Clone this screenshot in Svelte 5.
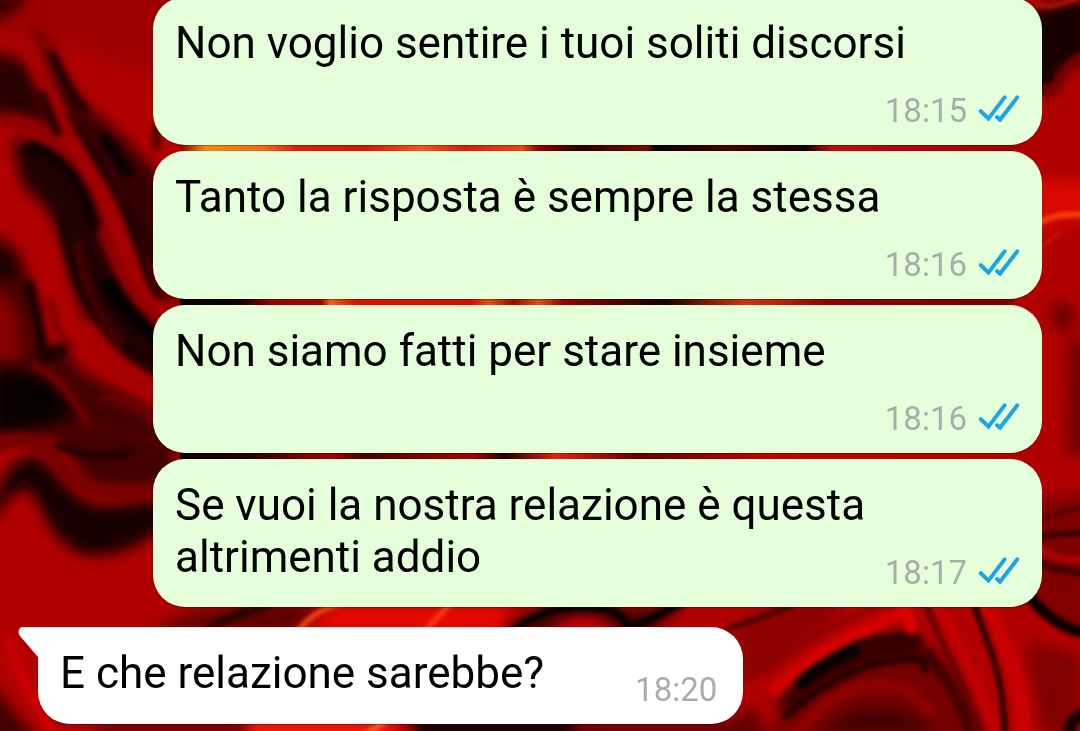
<script lang="ts">
  type Message = { text: string; time: string; sent: boolean };

  const messages: Message[] = [
    { text: 'Non voglio sentire i tuoi soliti discorsi', time: '18:15', sent: true },
    { text: 'Tanto la risposta è sempre la stessa', time: '18:16', sent: true },
    { text: 'Non siamo fatti per stare insieme', time: '18:16', sent: true },
    { text: 'Se vuoi la nostra relazione è questa altrimenti addio', time: '18:17', sent: true },
    { text: 'E che relazione sarebbe?', time: '18:20', sent: false },
  ];
</script>

<svg class="wallpaper" viewBox="0 0 1080 731" preserveAspectRatio="xMidYMid slice" aria-hidden="true">
  <defs>
    <filter id="soft" x="-20%" y="-20%" width="140%" height="140%" color-interpolation-filters="sRGB"><feGaussianBlur stdDeviation="7" /></filter>
    <filter id="fine" x="-20%" y="-20%" width="140%" height="140%" color-interpolation-filters="sRGB"><feGaussianBlur stdDeviation="3" /></filter>
    <filter id="sharp" x="-20%" y="-20%" width="140%" height="140%" color-interpolation-filters="sRGB"><feGaussianBlur stdDeviation="2" /></filter>
    <linearGradient id="gap1">
      <stop offset="0" stop-color="#8c0000" />
      <stop offset="0.03" stop-color="#f08a10" />
      <stop offset="0.1" stop-color="#ee6a18" />
      <stop offset="0.14" stop-color="#d82010" />
      <stop offset="0.22" stop-color="#d01808" />
      <stop offset="0.29" stop-color="#ee5a20" />
      <stop offset="0.34" stop-color="#d02010" />
      <stop offset="0.41" stop-color="#e04a18" />
      <stop offset="0.43" stop-color="#900000" />
      <stop offset="0.48" stop-color="#280000" />
      <stop offset="0.56" stop-color="#780a08" />
      <stop offset="0.57" stop-color="#080000" />
      <stop offset="0.66" stop-color="#480000" />
      <stop offset="0.75" stop-color="#100000" />
      <stop offset="0.78" stop-color="#b41010" />
      <stop offset="1" stop-color="#a00000" />
    </linearGradient>
    <linearGradient id="gap2">
      <stop offset="0" stop-color="#080000" />
      <stop offset="0.07" stop-color="#100000" />
      <stop offset="0.11" stop-color="#980000" />
      <stop offset="0.17" stop-color="#b00000" />
      <stop offset="0.18" stop-color="#f06010" />
      <stop offset="0.21" stop-color="#e01000" />
      <stop offset="0.35" stop-color="#e00800" />
      <stop offset="0.37" stop-color="#e85010" />
      <stop offset="0.4" stop-color="#a00800" />
      <stop offset="0.43" stop-color="#e05010" />
      <stop offset="0.46" stop-color="#980000" />
      <stop offset="0.58" stop-color="#180000" />
      <stop offset="0.68" stop-color="#d83010" />
      <stop offset="0.78" stop-color="#900000" />
      <stop offset="1" stop-color="#800000" />
    </linearGradient>
    <linearGradient id="gap3">
      <stop offset="0" stop-color="#100000" />
      <stop offset="0.08" stop-color="#200000" />
      <stop offset="0.18" stop-color="#a80000" />
      <stop offset="0.22" stop-color="#480000" />
      <stop offset="0.35" stop-color="#a80000" />
      <stop offset="0.39" stop-color="#200000" />
      <stop offset="0.45" stop-color="#e82010" />
      <stop offset="0.55" stop-color="#600000" />
      <stop offset="0.7" stop-color="#c00000" />
      <stop offset="1" stop-color="#b40000" />
    </linearGradient>
  </defs>

  <rect width="1080" height="731" fill="#b20000" />

  <!-- left folds, broad shadows -->
  <g filter="url(#soft)">
    <path d="M-10-10H175V95C120 60 60 40-10 40Z" fill="#a00000" />
    <path d="M-10-10H35L10 16-10 22Z" fill="#380000" />
    <path d="M-10 55C10 48 30 62 38 90L62 140C40 118 25 112-10 115Z" fill="#280000" />
    <path d="M30 22C55 50 60 75 85 105 112 125 140 150 175 195V310C140 270 128 220 98 178 70 135 55 85 30 22Z" fill="#380004" />
    <path d="M12 140C40 135 75 170 92 200 105 240 115 290 175 345V395C110 365 78 320 68 265 60 220 45 205 22 185Z" fill="#200003" />
    <path d="M-10 235C20 235 34 280 38 345L65 345 80 370 175 420V490H90L60 440-10 438Z" fill="#440000" />
    <path d="M-10 372C35 362 60 385 75 415 50 425 20 432-10 430Z" fill="#080000" />
    <path d="M-10 515C0 480 10 458 32 455 58 462 66 500 100 506L175 498V518C145 545 115 560 82 554 50 540 45 512 30 490 12 488 6 505-10 525Z" fill="#180000" />
    <path d="M-10 680C5 700 18 720 45 745H-10Z" fill="#400000" />
    <path d="M-10 290C15 290 20 315 22 360H-10Z" fill="#880000" />
    <path d="M-10 248C8 245 20 258 22 272L-10 282Z" fill="#180000" />
  </g>

  <!-- left folds, fine strands -->
  <g filter="url(#fine)" fill="none" stroke-linecap="round">
    <path d="M52 55C62 72 68 92 84 108" stroke="#160000" stroke-width="7" />
    <path d="M66 115C88 145 112 180 130 225S145 280 160 296" stroke="#190000" stroke-width="7" />
    <path d="M106 140 127 172" stroke="#080000" stroke-width="12" />
    <path d="M100 175C125 200 140 225 165 270" stroke="#280004" stroke-width="12" />
    <path d="M28 48C48 92 62 122 85 160S120 220 132 265 147 300 160 318" stroke="#a50000" stroke-width="12" />
    <path d="M5 122C55 125 84 175 98 215S125 290 165 330" stroke="#8e0000" stroke-width="10" />
    <path d="M42 94 58 132" stroke="#1c0000" stroke-width="8" />
    <path d="M32 148C65 157 85 190 94 225" stroke="#0e0000" stroke-width="13" />
    <path d="M62 218C68 270 90 320 130 350" stroke="#120000" stroke-width="7" />
    <path d="M108 285C120 305 135 322 165 342" stroke="#040000" stroke-width="16" />
    <path d="M78 245C82 285 100 320 120 342" stroke="#480000" stroke-width="9" />
    <path d="M28 285C38 310 38 335 45 358L62 350" stroke="#1c0000" stroke-width="12" />
    <path d="M50 300C54 320 58 335 70 345" stroke="#800000" stroke-width="9" />
    <path d="M88 330C110 362 128 372 165 395" stroke="#a60000" stroke-width="17" />
    <path d="M35 366C60 376 75 400 90 428" stroke="#700000" stroke-width="9" />
    <path d="M105 396C120 400 140 410 160 424" stroke="#700000" stroke-width="8" />
    <path d="M-5 448C25 430 50 446 65 470S115 490 155 492" stroke="#780000" stroke-width="14" />
    <path d="M58 444C75 455 100 460 130 452" stroke="#220000" stroke-width="8" />
    <path d="M80 430C105 424 130 436 160 446" stroke="#500000" stroke-width="7" />
    <path d="M156 128 157 146" stroke="#3c0000" stroke-width="7" />
    <path d="M8 640C20 675 35 705 55 735" stroke="#cc0000" stroke-width="9" />
  </g>

  <!-- right edge -->
  <g filter="url(#soft)">
    <path d="M1030 10 1090-5V55L1062 70 1056 91 1030 95Z" fill="#180000" />
    <path d="M1030 180H1100V216L1030 230Z" fill="#d80800" />
    <path d="M1055 300 1075 310 1068 335 1052 322Z" fill="#600000" />
    <path d="M1068 340H1100V455H1066Z" fill="#740000" />
    <path d="M1030 500 1100 490V640L1065 626 1030 600Z" fill="#800000" />
    <path d="M1025 640 1080 655V735H1042Z" fill="#800000" />
  </g>
  <g filter="url(#sharp)" fill="none">
    <path d="M1034 4C1050 10 1064 2 1082-2" stroke="#c01808" stroke-width="4" />
    <path d="M1042 88C1062 92 1062 62 1085 54" stroke="#780000" stroke-width="7" />
    <path d="M1038 224C1050 215 1065 214 1085 214" stroke="#ff4a08" stroke-width="5" />
    <path d="M1040 248 1060 232" stroke="#d81808" stroke-width="3" />
    <path d="M1040 519 1085 506" stroke="#500000" stroke-width="4" />
    <path d="M1040 536 1085 532" stroke="#340000" stroke-width="6" />
    <path d="M1038 562C1055 572 1065 568 1085 574" stroke="#380000" stroke-width="6" />
    <path d="M1040 549C1058 560 1070 560 1085 560" stroke="#c00000" stroke-width="5" />
    <path d="M1030 597C1048 618 1062 627 1085 633" stroke="#0b0000" stroke-width="11" />
    <path d="M1040 588 1085 610" stroke="#900000" stroke-width="4" />
    <path d="M1068 735C1070 722 1076 716 1086 712" stroke="#180000" stroke-width="12" />
  </g>

  <!-- bottom swirls -->
  <g filter="url(#soft)">
    <path d="M150 630C190 608 230 604 320 604L295 631Z" fill="#5c0000" />
    <path d="M305 632 340 604H510L500 632Z" fill="#e80800" />
    <path d="M500 632C530 610 560 602 600 604 630 612 650 612 690 600L650 632Z" fill="#380000" />
    <path d="M545 634C570 609 600 610 620 634Z" fill="#c80008" />
    <path d="M740 622C770 605 800 600 850 605L765 675H735Z" fill="#8c0000" />
    <path d="M765 740 785 705C820 660 860 630 910 632 950 650 970 700 990 740Z" fill="#750000" />
    <path d="M775 706C795 670 850 635 915 633L930 660C880 648 825 680 788 714Z" fill="#300000" />
    <path d="M820 740C835 705 900 690 935 735Z" fill="#480000" />
    <path d="M100 722H260L250 745H90Z" fill="#700000" />
    <path d="M245 718H400L390 745H250Z" fill="#f01808" />
    <path d="M410 716H580L570 745H420Z" fill="#180000" />
    <path d="M570 722H730L755 705 770 745H590Z" fill="#600000" />
  </g>
  <g filter="url(#sharp)" fill="none" stroke-linecap="round">
    <path d="M205 632C220 620 240 614 270 604" stroke="#300000" stroke-width="9" />
    <path d="M296 634C308 616 322 610 342 602" stroke="#f85010" stroke-width="5" />
    <path d="M422 634 454 600" stroke="#f84010" stroke-width="5" />
    <path d="M510 634C535 612 558 606 592 608S618 618 632 628L680 604" stroke="#080000" stroke-width="8" />
    <path d="M728 629 792 606" stroke="#400000" stroke-width="5" />
    <path d="M745 680C790 650 830 628 880 604" stroke="#8c0000" stroke-width="4" />
    <path d="M775 690C805 655 850 635 905 612" stroke="#d20000" stroke-width="12" />
    <path d="M802 682C822 665 845 654 862 646" stroke="#0a0000" stroke-width="13" />
    <path d="M862 646C880 639 898 637 915 640" stroke="#380000" stroke-width="11" />
    <path d="M786 716C812 692 855 664 895 660S918 664 926 670" stroke="#240000" stroke-width="6" />
    <path d="M905 604 911 628" stroke="#dc0000" stroke-width="12" />
    <path d="M926 604C938 640 962 676 982 735" stroke="#650000" stroke-width="6" />
    <path d="M928 655C945 675 962 700 972 740" stroke="#480000" stroke-width="12" />
    <path d="M938 606C962 645 980 690 996 735" stroke="#c40000" stroke-width="9" />
    <path d="M974 604C985 640 1003 665 1005 735" stroke="#280000" stroke-width="6" />
    <path d="M988 606C1008 650 1025 690 1024 735" stroke="#c80000" stroke-width="15" />
    <path d="M796 735C830 690 870 677 908 690L930 710" stroke="#8e0000" stroke-width="12" />
    <path d="M365 735 384 722" stroke="#ff6a20" stroke-width="5" />
  </g>

  <!-- slivers seen between bubbles -->
  <path d="M180 143H1014V153H180Z" fill="url(#gap1)" />
  <path d="M180 297H1014V307H180Z" fill="url(#gap2)" />
  <path d="M180 451H1014V461H180Z" fill="url(#gap3)" />
</svg>

<main class="chat">
  {#each messages as message}
    <article class="bubble" class:sent={message.sent} class:received={!message.sent}>
      {#if !message.sent}
        <svg class="tail" viewBox="0 0 22 32" aria-hidden="true">
          <path d="M22 0H5C1 0-1 5 2 9L20 30H22Z" fill="#fff" />
        </svg>
      {/if}
      <p class="text">{message.text}</p>
      <footer class="meta">
        <time>{message.time}</time>
        {#if message.sent}
          <svg class="ticks" viewBox="0 0 42 28" role="img" aria-label="Letto">
            <path d="M2.8 17.2 10.5 24.6 26.6 3.4M19 23 22 25.8 39.2 3.4" />
          </svg>
        {/if}
      </footer>
    </article>
  {/each}
</main>

<style>
  :global(body) {
    background: #b20000;
  }
  .wallpaper {
    position: fixed;
    inset: 0;
    width: 100%;
    height: 100%;
  }
  .chat {
    position: relative;
    display: flex;
    flex-direction: column;
    gap: 6px;
    margin-top: -3px;
    padding: 0 38px 7px;
    font-family: Roboto, "Noto Sans", sans-serif;
  }
  .bubble {
    box-sizing: border-box;
    padding: 20px 22px 14px;
    border-radius: 32px;
    box-shadow: 0 1px 1px rgba(0, 0, 0, 0.3);
  }
  .sent {
    display: grid;
    min-height: 148px;
    margin-left: 115px;
    background: #e5ffdb;
  }
  /* text and time share one cell, so the time can sit beside the last line */
  .sent .text,
  .sent .meta {
    grid-area: 1 / 1;
  }
  .sent .text {
    padding-right: 100px;
  }
  .received {
    position: relative;
    display: flex;
    align-self: flex-start;
    gap: 91px;
    min-height: 97px;
    margin-top: 14px;
    padding-right: 26px;
    border-top-left-radius: 0;
    background: #fff;
  }
  .tail {
    position: absolute;
    top: 0;
    left: -20px;
    width: 22px;
    height: 32px;
  }
  .text {
    margin: 0;
    color: #000;
    font-size: 44px;
    line-height: 52px;
  }
  .meta {
    display: flex;
    align-items: center;
    align-self: end;
    justify-self: end;
    gap: 11px;
    color: #a7aeaa;
    font-size: 33px;
    line-height: 40px;
  }
  .ticks {
    width: 42px;
    height: 28px;
    margin-bottom: 6px;
    fill: none;
    stroke: #1ba5e4;
    stroke-width: 4;
    stroke-linecap: round;
  }
</style>
